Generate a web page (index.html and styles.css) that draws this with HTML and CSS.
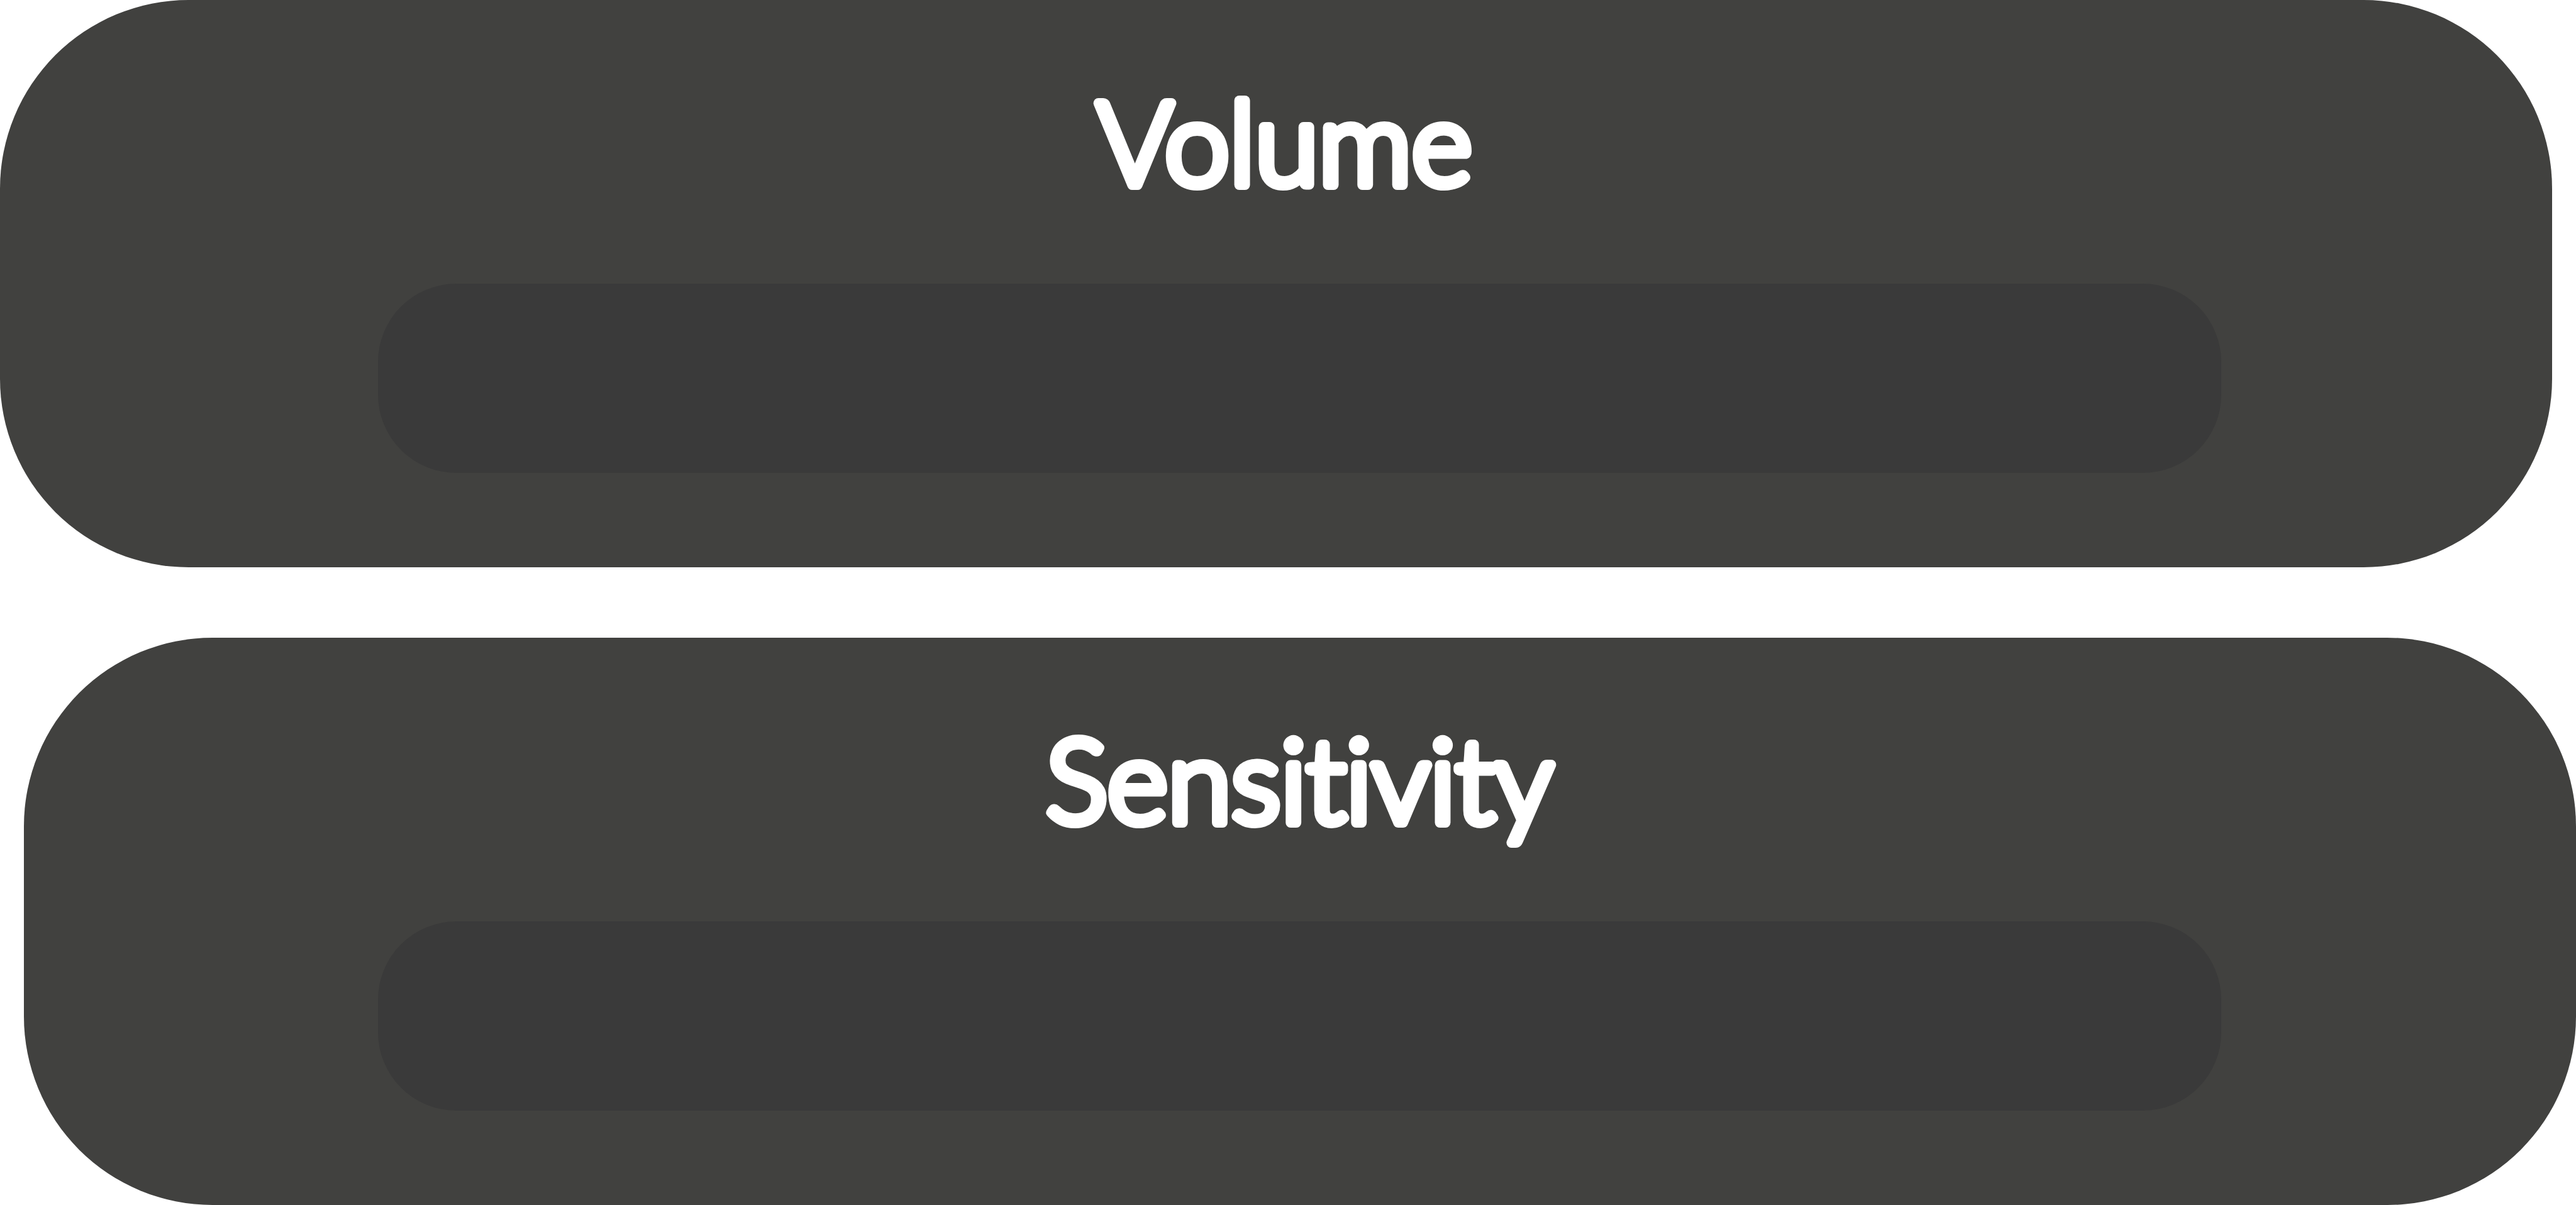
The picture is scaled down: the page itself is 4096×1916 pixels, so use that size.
FILE: index.html
```
<!DOCTYPE html>
<html lang="en">
<head>
<meta charset="utf-8">
<title>Settings</title>
<link rel="stylesheet" href="styles.css">
</head>
<body>
<main class="settings">
  <section class="panel panel--volume">
    <label class="panel__label" for="volume">
      <svg class="panel__title" role="presentation"><text x="50%" y="294">Volume</text></svg>
    </label>
    <input class="slider" id="volume" type="range" min="0" max="100" value="0">
  </section>
  <section class="panel panel--sensitivity">
    <label class="panel__label" for="sensitivity">
      <svg class="panel__title" role="presentation"><text x="50%" y="294">Sensitivity</text></svg>
    </label>
    <input class="slider" id="sensitivity" type="range" min="0" max="100" value="0">
  </section>
</main>
</body>
</html>
```
FILE: styles.css
```
* {
  box-sizing: border-box;
}

body {
  margin: 0;
  background: #fff;
  font-family: Lato, "Open Sans", sans-serif;
}

.settings {
  display: flex;
  flex-direction: column;
  gap: 112px;
}

.panel {
  display: flex;
  flex-direction: column;
  padding-bottom: 150px;
  border-radius: 300px;
  background: #41413f;
}

.panel--volume {
  margin-right: 38px;
  padding-left: 601px;
  padding-right: 526px;
}

.panel--sensitivity {
  margin-left: 38px;
  padding-left: 563px;
  padding-right: 564px;
}

.panel__label {
  display: block;
}

.panel--volume .panel__label {
  padding-right: 48px;
}

.panel__title {
  display: block;
  width: 100%;
  height: 451px;
}

/* The round-joined outline softens the ends of the letters. */
.panel__title text {
  fill: #fff;
  stroke: #fff;
  stroke-width: 16px;
  stroke-linejoin: round;
  stroke-linecap: round;
  text-anchor: middle;
  font-size: 184px;
  font-weight: 300;
  font-variant-ligatures: none;
}

.slider {
  appearance: none;
  display: block;
  width: 100%;
  height: 301px;
  margin: 0;
  border-radius: 125px;
  background: #3a3a3a;
  cursor: pointer;
}

.slider::-webkit-slider-thumb {
  appearance: none;
  width: 1px;
  height: 1px;
  background: transparent;
}
```
